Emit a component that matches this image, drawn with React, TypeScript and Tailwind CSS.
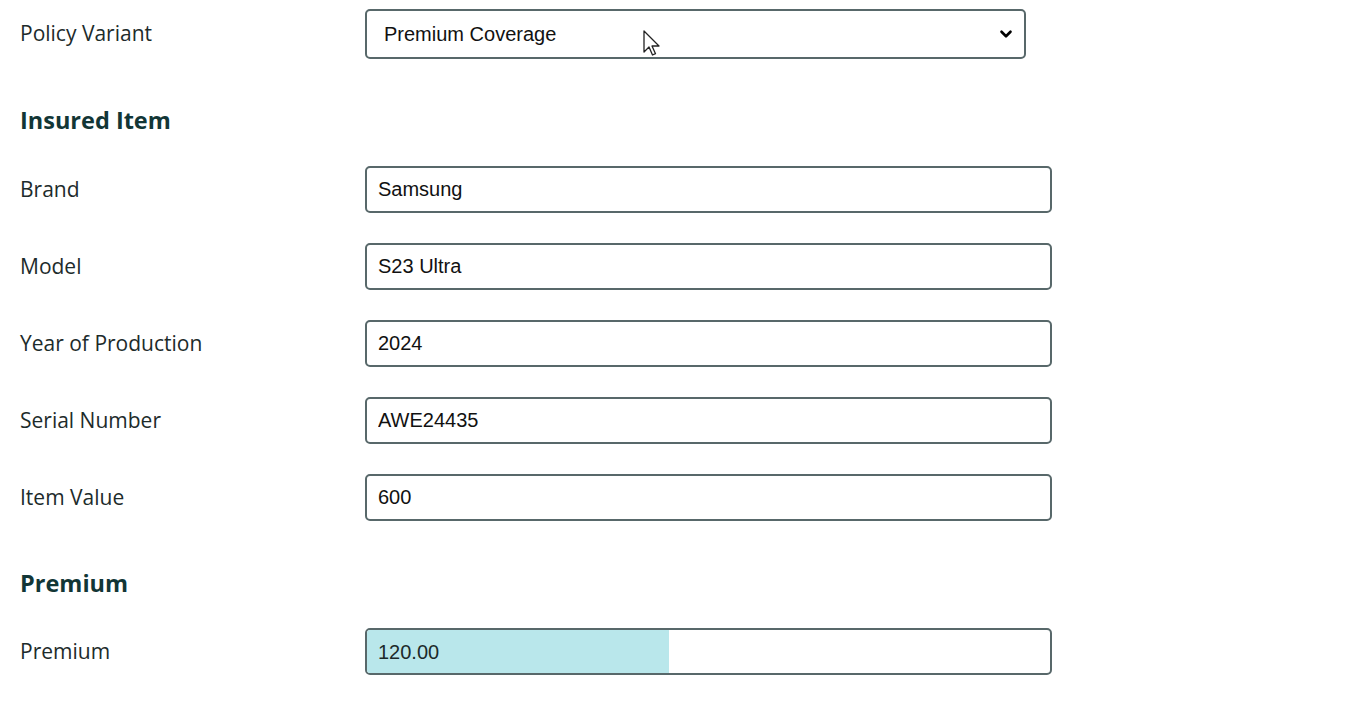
import { ChevronDown } from "lucide-react";

const items = [
  { label: "Brand", value: "Samsung" },
  { label: "Model", value: "S23 Ultra" },
  { label: "Year of Production", value: "2024" },
  { label: "Serial Number", value: "AWE24435" },
  { label: "Item Value", value: "600" },
];

const labelCls = "text-[21px] text-[#1d2b2b] font-['Open_Sans',sans-serif]";
const headingCls = "text-[23.5px] leading-8 font-bold text-[#123636] font-['Open_Sans',sans-serif]";
const fieldCls =
  "h-[47px] w-[687px] rounded-[5px] border-2 border-[#58686a] bg-white px-[11px] text-[20px] text-[#111] font-['Liberation_Sans',Arial,sans-serif] outline-none";

const Cursor = () => (
  <svg className="absolute left-[643px] top-[30px]" width="20" height="30" viewBox="0 0 20 30">
    <path d="M1 1 L1 22 L6 17 L9.5 25 L12.5 23.7 L9 16 L16 16 Z" fill="white" stroke="#222" strokeWidth="1.3" strokeLinejoin="round" />
  </svg>
);

const App = () => {
  return (
    <div className="relative min-h-screen bg-white pl-5 pt-[9px]">
      <div className="grid grid-cols-[345px_1fr] items-center">
        <span className={labelCls}>Policy Variant</span>
        <div className="flex h-[50px] w-[661px] items-center justify-between rounded-[5px] border-2 border-[#58686a] bg-white pl-[17px] pr-[9px]">
          <span className="text-[20px] text-[#111] font-['Liberation_Sans',Arial,sans-serif]">Premium Coverage</span>
          <ChevronDown className="h-[18px] w-[18px] text-black" strokeWidth={3.5} />
        </div>
      </div>

      <h2 className={`${headingCls} mt-[45px] mb-[30px]`}>Insured Item</h2>

      <div className="flex flex-col gap-[30px]">
        {items.map((item) => (
          <div key={item.label} className="grid grid-cols-[345px_1fr] items-center">
            <span className={labelCls}>{item.label}</span>
            <input className={fieldCls} defaultValue={item.value} />
          </div>
        ))}
      </div>

      <h2 className={`${headingCls} mt-[46px] mb-[29px]`}>Premium</h2>

      <div className="grid grid-cols-[345px_1fr] items-center">
        <span className={labelCls}>Premium</span>
        <div className="flex h-[47px] w-[687px] overflow-hidden rounded-[5px] border-2 border-[#58686a] bg-white">
          <div className="flex w-[302px] items-center bg-[#b9e7eb] px-[11px] text-[20px] text-[#1c2a2a] font-['Liberation_Sans',Arial,sans-serif]">
            120.00
          </div>
        </div>
      </div>

      <Cursor />
    </div>
  );
};

export default App;
